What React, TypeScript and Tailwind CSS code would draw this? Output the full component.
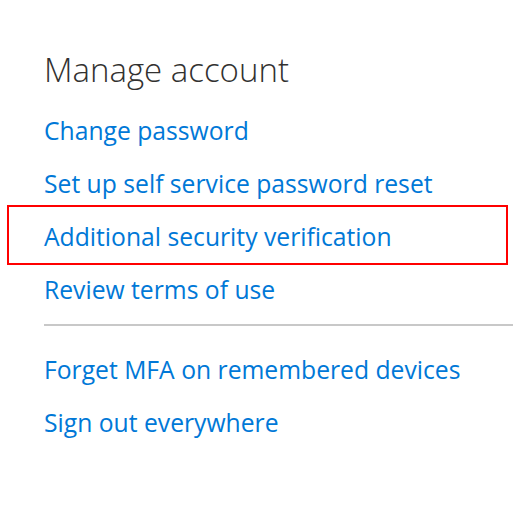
import React from "react";

const linkCls = "text-[24.7px] leading-[53px] text-[#0078d7] block whitespace-nowrap";

export default function App() {
  return (
    <div
      className="w-[513px] h-[516px] bg-white overflow-hidden pl-[44px] pt-[48px]"
      style={{ fontFamily: '"Open Sans", "Noto Sans", sans-serif' }}
    >
      <h1 className="text-[33px] font-light text-[#323130] leading-[44px] mb-[12px] whitespace-nowrap">
        Manage account
      </h1>
      <div className="flex flex-col">
        <a className={linkCls}>Change password</a>
        <a className={linkCls}>Set up self service password reset</a>
        <div className="ml-[-37px] mr-[5px] pl-[35px] pt-[3px] border-2 border-[#ff0000] h-[60px] mt-[-5px] mb-[-2px]">
          <a className={linkCls}>Additional security verification</a>
        </div>
        <a className={linkCls}>Review terms of use</a>
        <div className="h-[2px] bg-[#c8c8c8] mt-[8px] mb-[17px]" />
        <a className={linkCls}>Forget MFA on remembered devices</a>
        <a className={linkCls}>Sign out everywhere</a>
      </div>
    </div>
  );
}
